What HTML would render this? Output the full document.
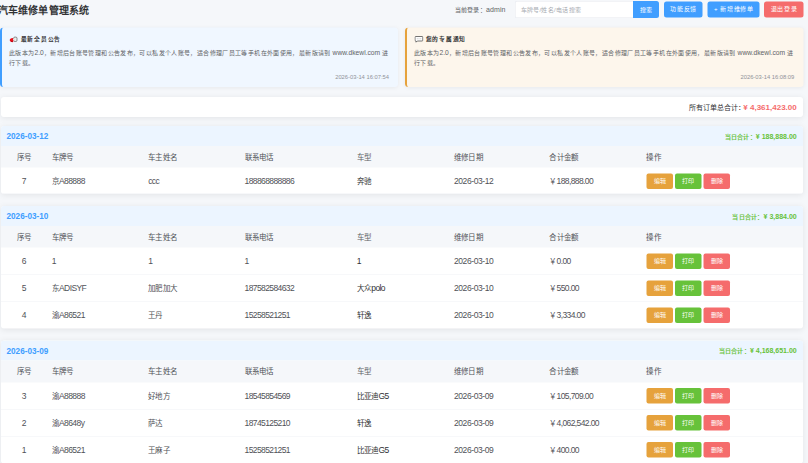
<!DOCTYPE html>
<html lang="zh-CN"><head><meta charset="utf-8">
<style>
*{box-sizing:border-box;margin:0;padding:0}
html,body{width:808px;height:463px;overflow:hidden;background:#f5f7fa}
body{font-family:"Liberation Sans",sans-serif;color:#606266}
#root{position:absolute;left:0;top:0;width:1616px;height:926px;transform:scale(.5);transform-origin:0 0}
.abs{position:absolute;white-space:nowrap}
.title{left:-4.6px;top:8px;font-size:20px;letter-spacing:0.34px;line-height:26px;font-weight:bold;color:#303133}
.login{left:909px;top:6.5px;font-size:12px;letter-spacing:0.6px;line-height:24px;color:#606266}
.inp{left:1030px;top:2px;width:236px;height:34px;background:#fff;border:1px solid #e6e9ef;border-right:none;border-radius:4px 0 0 4px;font-size:12px;letter-spacing:0.6px;line-height:33px;padding-left:10px;color:#a8abb2}
.btn{position:absolute;color:#fff;font-size:12px;letter-spacing:1.2px;text-indent:1.2px;text-align:center;border-radius:5px;white-space:nowrap}
.b1{left:1266px;top:2px;width:52px;height:34px;line-height:34px;background:#409eff;border-radius:0 5px 5px 0}
.b2{left:1328px;top:3.4px;width:77.4px;height:31.4px;line-height:31.4px;background:#409eff}
.b3{left:1414.8px;top:3.4px;width:104.2px;height:31.4px;line-height:31.4px;background:#409eff}
.b4{left:1528.4px;top:3.4px;width:78.2px;height:31.4px;line-height:31.4px;background:#f56c6c}
.notice{position:absolute;top:54.6px;height:119.6px;border-radius:7px;box-shadow:0 2px 8px rgba(0,0,0,.06)}
.n1{left:0;width:796px;background:#f0f7ff;border-left:4px solid #409eff}
.n2{left:810px;width:796.6px;background:#fdf6ec;border-left:4px solid #e6a23c}
.ntitle{position:absolute;left:37.6px;top:12.6px;font-size:11.4px;letter-spacing:2.4px;line-height:20px;font-weight:bold;color:#303133;white-space:nowrap}
.nicon{position:absolute;left:14px;top:18px}
.nbody{position:absolute;left:14px;top:41px;width:762px;font-size:12px;letter-spacing:0.75px;line-height:20px;color:#606266}
.ntime{position:absolute;right:18px;top:91px;font-size:11.6px;line-height:16px;color:#909399;white-space:nowrap}
.card{position:absolute;left:2px;width:1604px;background:#fff;border-radius:6px;box-shadow:0 2px 12px rgba(0,0,0,.08);overflow:hidden}
.total{top:193.6px;height:40.4px;font-size:14px;line-height:40px;text-align:right;padding-right:12.6px;color:#303133}
.total b{color:#f56c6c;font-size:16px;margin-left:-3.4px}
.dh{position:relative;height:40px;background:#ecf5ff;font-size:16.4px;line-height:40px;font-weight:bold}
.dh .d{position:absolute;left:11px;color:#409eff}
.dh .s{position:absolute;right:12.6px;color:#67c23a;font-size:12px;letter-spacing:0.5px}
.dh .s b{font-size:14px;letter-spacing:0}
.row{position:relative;height:54px;border-bottom:1px solid #eef0f4;font-size:15px;letter-spacing:-0.5px;line-height:56px;color:#505257}
.card1 .row{height:52.8px;line-height:55.6px}
.row.h,.card1 .row.h{height:43.4px;line-height:44.4px;background:#f5f7fa;border-bottom:none}
.row span{position:absolute;white-space:nowrap}
.c0{left:0;width:91px;text-align:center}
.c1{left:101.6px}.c2{left:294.4px}.c3{left:487px}.c4{left:711.6px;color:#303133}.c5{left:905.8px}.c6{left:1096.6px}.c7{left:1290.6px}
.row.h .c4{color:#606266}
.ops{top:11.2px;line-height:normal}
.ob{display:inline-block;width:53px;height:31.2px;line-height:31.2px;border-radius:4px;color:#fff;font-size:12px;font-style:normal;text-align:center;margin-right:4px;vertical-align:top}
.oe{background:#e6a23c}.op{background:#67c23a}.od{background:#f56c6c}

.l{font-style:normal;font-size:17px;letter-spacing:-1.2px}
.login i{font-style:normal;font-size:14px;letter-spacing:0.2px}
.c5 .l{letter-spacing:-0.8px}
.nl{font-style:normal;font-size:13.4px;letter-spacing:0}

</style></head><body><div id="root">
<div class="abs title">汽车维修单管理系统</div>
<div class="abs login">当前登录：<i>admin</i></div>
<div class="abs inp">车牌号/姓名/电话搜索</div>
<div class="btn b1">搜索</div>
<div class="btn b2">功能反馈</div>
<div class="btn b3">+ 新增维修单</div>
<div class="btn b4">退出登录</div>
<div class="notice n1">
  <svg class="nicon" style="top:17.2px" width="18" height="13" viewBox="0 0 18 13"><rect x="9.2" y="2.2" width="6.8" height="8.8" rx="2.4" fill="#ececec" stroke="#666" stroke-width="1.5"/><path d="M6 6 L10 5.4 V8.6 L6 9 Z" fill="#f4f4f4"/><path d="M8 4.2 Q4.5 4.4 2.2 6.2 Q0.6 8 2 10 Q4 12.4 7.2 12.4 L8.6 11 Z" fill="#e8101c"/><path d="M3 10.4 Q4.8 12.2 7.2 12.3 L8 11.2 Q5.5 10.8 3 10.4Z" fill="#8a0010"/></svg>
  <div class="ntitle">最新全员公告</div>
  <div class="nbody">此版本为<i class="nl">2.0</i>，新增后台账号管理和公告发布，可以私发个人账号，适合修理厂员工等手机在外面使用，最新版请到<i class="nl"> www.dkewl.com </i>进行下载。</div>
  <div class="ntime">2026-03-14 16:07:54</div>
</div>
<div class="notice n2">
  <svg class="nicon" style="left:15.4px;top:17px" width="18" height="16" viewBox="0 0 18 16"><path d="M2.5 1 H15.2 Q16.6 1 16.6 2.4 V8.6 Q16.6 10 15.2 10 H5.5 L3.2 12.4 V10 H2.5 Q1 10 1 8.6 V2.4 Q1 1 2.5 1 Z" fill="#fff" stroke="#505050" stroke-width="1.6" stroke-linejoin="round"/><path d="M4.5 5.6 h9" stroke="#b5b5b5" stroke-width="1.6" stroke-dasharray="2 1.5"/></svg>
  <div class="ntitle">您的专属通知</div>
  <div class="nbody">此版本为<i class="nl">2.0</i>，新增后台账号管理和公告发布，可以私发个人账号，适合修理厂员工等手机在外面使用，最新版请到<i class="nl"> www.dkewl.com </i>进行下载。</div>
  <div class="ntime">2026-03-14 16:08:09</div>
</div>
<div class="abs card total">所有订单总合计：<b>¥ 4,361,423.00</b></div>
<div class="card card1" style="top:252px">
<div class="dh"><span class="d">2026-03-12</span><span class="s">当日合计：<b>¥ 188,888.00</b></span></div>
<div class="row h"><span class="c0">序号</span><span class="c1">车牌号</span><span class="c2">车主姓名</span><span class="c3">联系电话</span><span class="c4">车型</span><span class="c5">维修日期</span><span class="c6">合计金额</span><span class="c7">操作</span></div>
<div class="row"><span class="c0"><i class="l">7</i></span><span class="c1">京<i class="l">A88888</i></span><span class="c2"><i class="l">ccc</i></span><span class="c3"><i class="l">188868888886</i></span><span class="c4">奔驰</span><span class="c5"><i class="l">2026-03-12</i></span><span class="c6">￥<i class="l">188,888.00</i></span><span class="c7 ops"><i class="ob oe">编辑</i><i class="ob op">打印</i><i class="ob od">删除</i></span></div>
</div>
<div class="card " style="top:412px">
<div class="dh"><span class="d">2026-03-10</span><span class="s">当日合计：<b>¥ 3,884.00</b></span></div>
<div class="row h"><span class="c0">序号</span><span class="c1">车牌号</span><span class="c2">车主姓名</span><span class="c3">联系电话</span><span class="c4">车型</span><span class="c5">维修日期</span><span class="c6">合计金额</span><span class="c7">操作</span></div>
<div class="row"><span class="c0"><i class="l">6</i></span><span class="c1"><i class="l">1</i></span><span class="c2"><i class="l">1</i></span><span class="c3"><i class="l">1</i></span><span class="c4"><i class="l">1</i></span><span class="c5"><i class="l">2026-03-10</i></span><span class="c6">￥<i class="l">0.00</i></span><span class="c7 ops"><i class="ob oe">编辑</i><i class="ob op">打印</i><i class="ob od">删除</i></span></div>
<div class="row"><span class="c0"><i class="l">5</i></span><span class="c1">东<i class="l">ADISYF</i></span><span class="c2">加肥加大</span><span class="c3"><i class="l">187582584632</i></span><span class="c4">大众<i class="l">polo</i></span><span class="c5"><i class="l">2026-03-10</i></span><span class="c6">￥<i class="l">550.00</i></span><span class="c7 ops"><i class="ob oe">编辑</i><i class="ob op">打印</i><i class="ob od">删除</i></span></div>
<div class="row"><span class="c0"><i class="l">4</i></span><span class="c1">渝<i class="l">A86521</i></span><span class="c2">王丹</span><span class="c3"><i class="l">15258521251</i></span><span class="c4">轩逸</span><span class="c5"><i class="l">2026-03-10</i></span><span class="c6">￥<i class="l">3,334.00</i></span><span class="c7 ops"><i class="ob oe">编辑</i><i class="ob op">打印</i><i class="ob od">删除</i></span></div>
</div>
<div class="card " style="top:681.4px">
<div class="dh"><span class="d">2026-03-09</span><span class="s">当日合计：<b>¥ 4,168,651.00</b></span></div>
<div class="row h"><span class="c0">序号</span><span class="c1">车牌号</span><span class="c2">车主姓名</span><span class="c3">联系电话</span><span class="c4">车型</span><span class="c5">维修日期</span><span class="c6">合计金额</span><span class="c7">操作</span></div>
<div class="row"><span class="c0"><i class="l">3</i></span><span class="c1">渝<i class="l">A88888</i></span><span class="c2">好地方</span><span class="c3"><i class="l">18545854569</i></span><span class="c4">比亚迪<i class="l">G5</i></span><span class="c5"><i class="l">2026-03-09</i></span><span class="c6">￥<i class="l">105,709.00</i></span><span class="c7 ops"><i class="ob oe">编辑</i><i class="ob op">打印</i><i class="ob od">删除</i></span></div>
<div class="row"><span class="c0"><i class="l">2</i></span><span class="c1">渝<i class="l">A8648y</i></span><span class="c2">萨达</span><span class="c3"><i class="l">18745125210</i></span><span class="c4">轩逸</span><span class="c5"><i class="l">2026-03-09</i></span><span class="c6">￥<i class="l">4,062,542.00</i></span><span class="c7 ops"><i class="ob oe">编辑</i><i class="ob op">打印</i><i class="ob od">删除</i></span></div>
<div class="row"><span class="c0"><i class="l">1</i></span><span class="c1">渝<i class="l">A86521</i></span><span class="c2">王麻子</span><span class="c3"><i class="l">15258521251</i></span><span class="c4">比亚迪<i class="l">G5</i></span><span class="c5"><i class="l">2026-03-09</i></span><span class="c6">￥<i class="l">400.00</i></span><span class="c7 ops"><i class="ob oe">编辑</i><i class="ob op">打印</i><i class="ob od">删除</i></span></div>
</div>

</div></body></html>
